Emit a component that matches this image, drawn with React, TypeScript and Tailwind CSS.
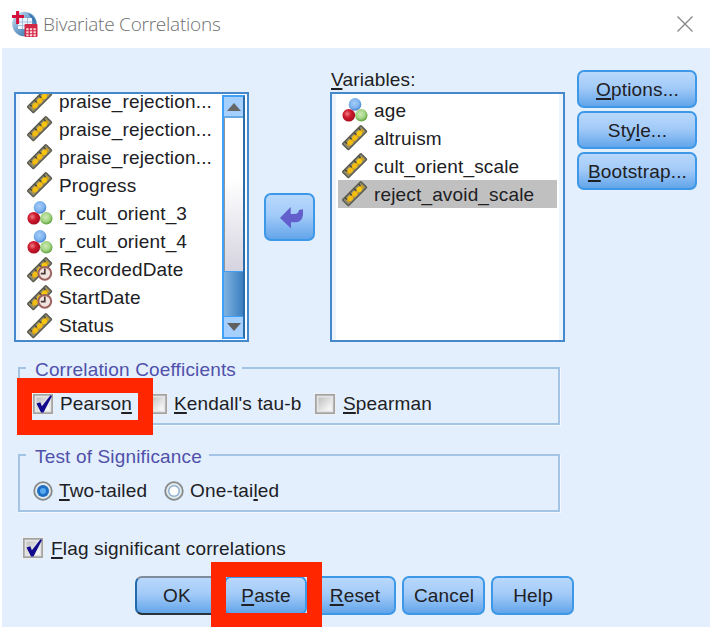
import type { ReactNode } from 'react';

type IconKind = 'scale' | 'nominal' | 'date';

function Ruler() {
  return (
    <g transform="rotate(-45 12 12)">
      <rect x="-1.4" y="7.6" width="26" height="8.4" rx="0.8" fill="#8b8a74" stroke="#5b5a4e" strokeWidth="1.4" />
      <rect x="1" y="10.2" width="22" height="4" fill="#d1a01c" />
      <circle cx="5.2" cy="12.1" r="2.7" fill="#f3bd13" />
      <circle cx="11.6" cy="12.1" r="2.7" fill="#f3bd13" />
      <circle cx="18" cy="12.1" r="2.7" fill="#f9c60e" />
      <path d="M2 8v2.600M8.400 8v3M14.800 8v3M21.200 8v2.600" stroke="#47463c" strokeWidth="1.3" />
    </g>
  );
}

function VarIcon({ kind }: { kind: IconKind }) {
  if (kind === 'nominal') {
    return (
      <svg width="26" height="26" viewBox="0 0 26 26" className="shrink-0">
        <defs>
          <radialGradient id="blueBall" cx="45%" cy="40%" r="60%">
            <stop offset="0" stopColor="#a4cbf6" />
            <stop offset="0.65" stopColor="#7fb3ef" />
            <stop offset="1" stopColor="#3f80cf" />
          </radialGradient>
          <radialGradient id="redBall" cx="38%" cy="38%" r="65%">
            <stop offset="0" stopColor="#f08088" />
            <stop offset="0.45" stopColor="#cf1c2e" />
            <stop offset="1" stopColor="#a60b20" />
          </radialGradient>
          <radialGradient id="greenBall" cx="45%" cy="40%" r="60%">
            <stop offset="0" stopColor="#cdeab4" />
            <stop offset="0.6" stopColor="#a2d483" />
            <stop offset="1" stopColor="#5c9f3c" />
          </radialGradient>
        </defs>
        <circle cx="13" cy="7.4" r="6.3" fill="url(#blueBall)" />
        <circle cx="19.3" cy="18.3" r="6.2" fill="url(#greenBall)" />
        <circle cx="6.8" cy="18.3" r="6.3" fill="url(#redBall)" />
      </svg>
    );
  }
  return (
    <svg width="26" height="26" viewBox="-1 -0.5 26 26" className="shrink-0">
      <Ruler />
      {kind === 'date' && (
        <g>
          <circle cx="16.8" cy="15.8" r="6.4" fill="#f1e4df" stroke="#9c625f" strokeWidth="2" />
          <path d="M16.8 11v5.2h-4" fill="none" stroke="#4a3838" strokeWidth="1.7" />
        </g>
      )}
    </svg>
  );
}

function Row({ kind, label, selected }: { kind: IconKind; label: string; selected?: boolean }) {
  return (
    <div className={`flex h-[28.1px] shrink-0 items-center gap-[6px] pl-[4px] ${selected ? 'bg-[#c0c0c0]' : ''}`}>
      <VarIcon kind={kind} />
      <span className="whitespace-nowrap pt-px">{label}</span>
    </div>
  );
}

function Key({ children }: { children: ReactNode }) {
  return <span className="underline decoration-[1.5px] underline-offset-[2px] [text-decoration-skip-ink:none]">{children}</span>;
}

function Button({ children, className = '' }: { children: ReactNode; className?: string }) {
  return (
    <button
      className={`flex items-center justify-center whitespace-nowrap rounded-[7px] border-2 border-[#3d98e8] bg-linear-to-b from-[#b9d8fc] via-[#a3cbf8] via-45% to-[#62a5ea] pl-px pt-px ${className}`}
    >
      {children}
    </button>
  );
}

function CheckBox({ checked }: { checked?: boolean }) {
  return (
    <svg width="22" height="22" viewBox="0 0 22 22" className="shrink-0">
      <defs>
        <linearGradient id="boxFill" x1="0" y1="0" x2="1" y2="1">
          <stop offset="0" stopColor="#bfbfbf" />
          <stop offset="1" stopColor="#ffffff" />
        </linearGradient>
      </defs>
      <rect width="22" height="22" fill="#f5f7f8" />
      <rect x="1.8" y="1.8" width="18.4" height="18.4" fill="#e4e4e4" stroke="#a3a3a3" strokeWidth="1.8" />
      <rect x="4.5" y="4.5" width="13" height="13" fill="url(#boxFill)" />
      {checked && <path d="M4.5 10.5l3.8-1.200 1.600 4L18.5 2.200l1.500.8L11.500 19.500H9z" fill="#120a8c" />}
    </svg>
  );
}

function Radio({ checked }: { checked?: boolean }) {
  return (
    <svg width="20" height="20" viewBox="0 0 20 20" className="shrink-0">
      <circle cx="10" cy="10" r="8.8" fill="#e3e8ea" stroke="#858b8d" strokeWidth="1.8" />
      <circle cx="10" cy="10" r="6" fill={checked ? '#1c6fc4' : '#8fb0d0'} />
      <circle cx="10" cy="10" r={checked ? 3 : 4.5} fill={checked ? '#5aaaf0' : '#ffffff'} />
    </svg>
  );
}

function Group({ title, titleClass, children }: { title: string; titleClass: string; children: ReactNode }) {
  return (
    <fieldset className="h-[69px] w-[542px] border-2 border-[#a3c4e4] pl-[6px] shadow-[1px_1px_0_#f4f9ff]">
      <legend className={`h-[24px] whitespace-nowrap pl-[9px] pt-px leading-[26px] text-[#5051ab] ${titleClass}`}>{title}</legend>
      <div className="mt-[13px] flex h-[22px] items-center pl-[6px]">{children}</div>
    </fieldset>
  );
}

export default function App() {
  return (
    <div className="relative flex h-[627px] w-[710px] flex-col overflow-hidden bg-white font-['Liberation_Sans',Arial,sans-serif] text-[19px] leading-[24px] tracking-[0.16px] text-[#202024]">
      <header className="flex h-[48px] shrink-0 items-center pl-[11px] pr-[16px]">
        <svg width="27" height="27" viewBox="0 0 27 27">
          <defs>
            <linearGradient id="globe" x1="0" y1="0" x2="1" y2="1">
              <stop offset="0" stopColor="#d9e8f6" />
              <stop offset="0.5" stopColor="#6d9fcb" />
              <stop offset="1" stopColor="#2e6ba6" />
            </linearGradient>
          </defs>
          <circle cx="13.5" cy="13" r="12.3" fill="url(#globe)" />
          <path d="M17 2a12.300 12.300 0 0 1 8 12l-3-4z" fill="#3b78b2" />
          <rect x="7" y="7" width="14" height="11" fill="#edf4fb" />
          <path d="M7 11h14M7 14.500h14M11.500 7v11M16.500 7v11" stroke="#a4c1de" strokeWidth="1" />
          <path d="M6.600 0v13M1 5.500h12" stroke="#d50f3c" strokeWidth="3" />
          <rect x="13.5" y="13" width="13" height="13" rx="1" fill="#d22845" />
          <path d="M15.300 18.200h9.700M15.300 21.300h9.700M15.300 24.200h9.700" stroke="#ffd9df" strokeWidth="1.9" strokeDasharray="2.3 1.3" />
        </svg>
        <h1 className="ml-[5px] whitespace-nowrap font-['Open_Sans','Noto_Sans',sans-serif] text-[19px] font-light tracking-[-0.24px] text-[#707070]">
          Bivariate Correlations
        </h1>
        <svg width="18" height="18" viewBox="0 0 18 18" className="ml-auto">
          <path d="M1.500 1.500l15 15M16.500 1.500l-15 15" stroke="#858585" strokeWidth="1.3" />
        </svg>
      </header>

      <main className="ml-[2px] flex grow flex-col bg-[#e3effc]">
        <div className="flex h-[294px] items-start pl-[12px] pt-[20px]">
          <div className="mt-[24px] flex h-[250px] w-[235px] border-2 border-[#4588cb] bg-white">
            <div className="flex min-w-0 grow flex-col overflow-hidden border-l-4 border-[#eff5fc] pl-[3px]">
              <div className="-mt-[7px] flex flex-col">
                <Row kind="scale" label="praise_rejection..." />
                <Row kind="scale" label="praise_rejection..." />
                <Row kind="scale" label="praise_rejection..." />
                <Row kind="scale" label="Progress" />
                <Row kind="nominal" label="r_cult_orient_3" />
                <Row kind="nominal" label="r_cult_orient_4" />
                <Row kind="date" label="RecordedDate" />
                <Row kind="date" label="StartDate" />
                <Row kind="scale" label="Status" />
              </div>
            </div>
            <div className="mb-[1px] mr-[2px] mt-[1px] flex w-[23px] shrink-0 flex-col border-2 border-[#3fa0f5] border-r-[#2b6cab] bg-white">
              <div className="flex h-[21px] items-center justify-center border-b-2 border-[#6aa9e4] bg-[#a5cffd]">
                <svg width="14" height="8" viewBox="0 0 14 8"><path d="M0 8L7 0l7 8z" fill="#676767" /></svg>
              </div>
              <div className="grow border-l border-[#8d959d] bg-linear-to-b from-white via-white via-40% to-[#d5d3df]" />
              <div className="h-[46px] border-y border-[#3fa0f5] bg-linear-to-r from-[#7eb3df] to-[#3b7fc0]" />
              <div className="flex h-[20px] items-center justify-center bg-[#a5cffd]">
                <svg width="14" height="8" viewBox="0 0 14 8"><path d="M0 0h14L7 8z" fill="#606060" /></svg>
              </div>
            </div>
          </div>

          <Button className="ml-[15px] mt-[125px] h-[48px] w-[51px]">
            <svg width="23" height="22" viewBox="0 0 23 22" className="ml-[2px]">
              <path d="M0 11L10.700 0v7H14.500Q18.500 7 19 3L23 2.300V8Q22 15.200 16 15.200H11V21.500z" fill="#625fcc" />
            </svg>
          </Button>

          <div className="ml-[15px] flex w-[235px] flex-col">
            <div className="h-[24px] pl-px leading-[23px]"><Key>V</Key>ariables:</div>
            <div className="flex h-[250px] flex-col border-2 border-[#4588cb] bg-white">
              <div className="grow border-x-4 border-[#eff5fc] px-[2px] pt-[2px]">
                <Row kind="nominal" label="age" />
                <Row kind="scale" label="altruism" />
                <Row kind="scale" label="cult_orient_scale" />
                <Row kind="scale" label="reject_avoid_scale" selected />
              </div>
            </div>
          </div>

          <div className="ml-[12px] mt-[2px] flex w-[120px] flex-col gap-[3px]">
            <Button className="h-[38px]"><Key>O</Key>ptions...</Button>
            <Button className="h-[38px]">Sty<Key>l</Key>e...</Button>
            <Button className="h-[38px]"><Key>B</Key>ootstrap...</Button>
          </div>
        </div>

        <div className="mt-[14px] flex flex-col gap-[18px] pl-[16px]">
          <Group title="Correlation Coefficients" titleClass="w-[216px]">
            <CheckBox checked />
            <span className="ml-[6px] w-[86px]">Pearso<Key>n</Key></span>
            <CheckBox />
            <span className="ml-[6px] w-[140px]"><Key>K</Key>endall's tau-b</span>
            <CheckBox />
            <span className="ml-[7px]"><Key>S</Key>pearman</span>
          </Group>
          <Group title="Test of Significance" titleClass="w-[183px]">
            <span className="ml-px flex"><Radio checked /></span>
            <span className="ml-[6px] w-[105px]"><Key>T</Key>wo-tailed</span>
            <Radio />
            <span className="ml-[6px]">One-tai<Key>l</Key>ed</span>
          </Group>
        </div>

        <div className="mt-[25px] flex h-[22px] items-center pl-[20px]">
          <CheckBox checked />
          <span className="ml-[7px] pt-px"><Key>F</Key>lag significant correlations</span>
        </div>

        <div className="mt-[17px] flex gap-[6px] pl-[133px]">
          <Button className="h-[39px] w-[83px] border-b-[#29333e] border-l-[#226aaa] border-t-[#7e8c9b]">OK</Button>
          <Button className="h-[39px] w-[83px]"><Key>P</Key>aste</Button>
          <Button className="h-[39px] w-[83px]"><Key>R</Key>eset</Button>
          <Button className="h-[39px] w-[83px]">Cancel</Button>
          <Button className="h-[39px] w-[83px]">Help</Button>
        </div>
      </main>

      <div className="absolute left-[17px] top-[378px] h-[57px] w-[136px] border-[15px] border-[#ff2600]" />
      <div className="absolute left-[211px] top-[562px] h-[66px] w-[111px] border-[15px] border-[#ff2600]" />
    </div>
  );
}
